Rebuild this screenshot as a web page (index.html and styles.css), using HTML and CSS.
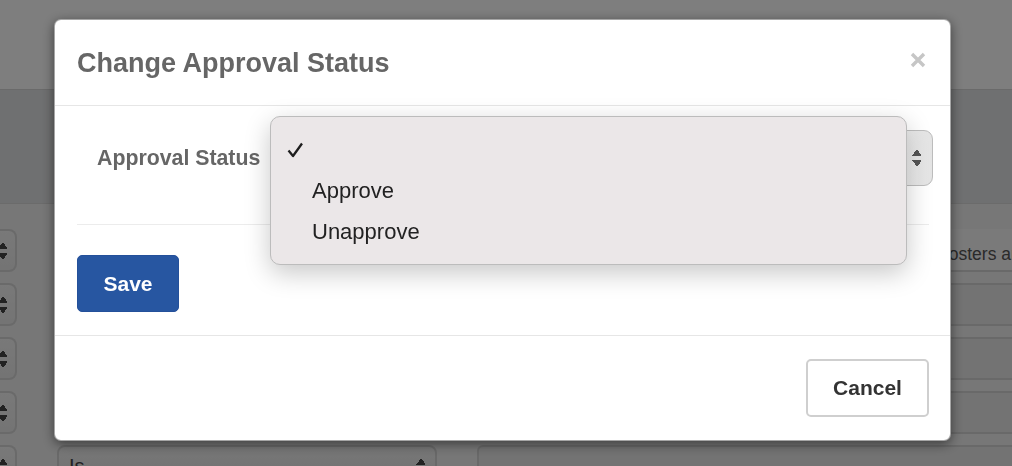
FILE: index.html
```html
<!DOCTYPE html>
<html lang="en">
<head>
  <meta charset="UTF-8">
  <title>Posters – Change Approval Status</title>
  <meta name="viewport" content="width=device-width, initial-scale=1">
  <link rel="stylesheet" href="styles.css">
</head>
<body>

  <!-- page behind the modal -->
  <div class="page">
    <div class="topbar"></div>
    <div class="band"></div>

    <div class="filters">
      <div class="stub"><span class="arrows"></span></div>
      <div class="field"></div>
      <div class="field text">posters and materials</div>

      <div class="stub"><span class="arrows"></span></div>
      <div class="field"></div>
      <div class="field"></div>

      <div class="stub"><span class="arrows"></span></div>
      <div class="field"></div>
      <div class="field"></div>

      <div class="stub"><span class="arrows"></span></div>
      <div class="field"></div>
      <div class="field"></div>

      <div class="stub"><span class="arrows"></span></div>
      <div class="field select">Is<span class="arrows"></span></div>
      <div class="field"></div>
    </div>
  </div>

  <div class="backdrop"></div>

  <div class="modal">
    <div class="modal-header">
      <h4 class="modal-title">Change Approval Status</h4>
      <span class="close">
        <svg width="16" height="16" viewBox="0 0 16 16">
          <path d="M2 2 L14 14 M14 2 L2 14" stroke="#c6c6c6" stroke-width="3.4" fill="none"/>
        </svg>
      </span>
    </div>

    <div class="modal-body">
      <div class="form-row">
        <label class="form-label">Approval Status</label>
        <div class="status-select"><span class="arrows"></span></div>
      </div>
      <hr>
      <button class="btn btn-primary">Save</button>
    </div>

    <div class="modal-footer">
      <button class="btn btn-default">Cancel</button>
    </div>

    <!-- open native dropdown -->
    <ul class="dropdown">
      <li class="selected">
        <svg class="check" width="16" height="16" viewBox="0 0 16 16">
          <path d="M1.5 8.5 L6 14 L15 1.5" stroke="#1e1e1e" stroke-width="2.3" fill="none" stroke-linejoin="round"/>
        </svg>
      </li>
      <li>Approve</li>
      <li>Unapprove</li>
    </ul>
  </div>

</body>
</html>
```

FILE: styles.css
```css
* { box-sizing: border-box; }

html, body {
  margin: 0;
  height: 466px;
  overflow: hidden;
}
body {
  font-family: 'Liberation Sans', Arial, 'Helvetica Neue', sans-serif;
  background: #fcfcfc;
  color: #333;
}

/* ---------- background page ---------- */
.topbar {
  height: 90px;
  background: #fcfcfc;
  border-bottom: 1px solid #d4d4d4;
}
.band {
  height: 114px;
  background: #dfe0e2;
  border-bottom: 1px solid #d6d6d6;
}
.filters {
  display: grid;
  grid-template-columns: 17px 380px 1fr;
  grid-auto-rows: 43px;
  column-gap: 40px;
  row-gap: 11px;
  padding-top: 25px;
  background: #efefef;
}
.stub {
  margin-left: -40px;
  border: 2px solid #d4d4d4;
  border-left: none;
  border-radius: 0 8px 8px 0;
  background: linear-gradient(#f2f2f2, #e8e8e8);
  display: flex;
  align-items: center;
  justify-content: flex-end;
  padding-right: 8px;
}
.field {
  border: 2px solid #d2d2d2;
  border-right: none;
  border-radius: 6px 0 0 6px;
  background: #e6e6e6;
}
.field.text {
  border: none;
  border-bottom: 2px solid #d2d2d2;
  border-radius: 0;
  background: #f4f4f4;
  display: flex;
  align-items: center;
  padding: 9px 0 0 462px;
  font-size: 17.5px;
  color: #555;
  white-space: nowrap;
  overflow: hidden;
}
.field.select {
  border-right: 2px solid #d2d2d2;
  border-radius: 8px;
  background: linear-gradient(#efefef, #e2e2e2);
  padding: 0 10px;
  font-size: 20px;
  color: #444;
  display: flex;
  align-items: center;
  justify-content: space-between;
}

.arrows {
  display: inline-block;
  width: 9px;
  height: 18px;
  --c: #444;
  background:
    linear-gradient(to bottom right, transparent 50%, var(--c) 50%) 0 0 / 5px 7px no-repeat,
    linear-gradient(to bottom left, transparent 50%, var(--c) 50%) 4.5px 0 / 5px 7px no-repeat,
    linear-gradient(to top right, transparent 50%, var(--c) 50%) 0 11px / 5px 7px no-repeat,
    linear-gradient(to top left, transparent 50%, var(--c) 50%) 4.5px 11px / 5px 7px no-repeat;
}

.backdrop {
  position: fixed;
  inset: 0;
  background: rgba(0, 0, 0, 0.5);
}

/* ---------- modal ---------- */
.modal {
  position: fixed;
  top: 19px;
  left: 54px;
  width: 897px;
  background: #fff;
  border: 1px solid rgba(0, 0, 0, 0.35);
  border-radius: 7px;
  box-shadow: 0 3px 12px rgba(0, 0, 0, 0.5);
}
.modal-header {
  height: 86px;
  padding: 2px 24px 0 22px;
  display: flex;
  align-items: center;
  justify-content: space-between;
  border-bottom: 1px solid #e6e6e6;
}
.modal-title {
  margin: 0;
  font-size: 27px;
  font-weight: bold;
  color: #666;
}
.close {
  display: flex;
  margin-bottom: 8px;
}

.modal-body {
  padding: 24px 21px 23px 22px;
  border-bottom: 1px solid #e6e6e6;
}
.form-row {
  display: flex;
  align-items: center;
  gap: 16px;
  padding-left: 20px;
  margin-right: -4px;
}
.form-label {
  font-size: 21.3px;
  font-weight: bold;
  color: #666;
  white-space: nowrap;
}
.status-select {
  flex: 1;
  height: 56px;
  border: 1px solid #bdbdbd;
  border-radius: 9px;
  background: linear-gradient(to right, #fff 85%, #e4e4e4), linear-gradient(#fbfbfb, #e6e6e6);
  display: flex;
  align-items: center;
  justify-content: flex-end;
  padding-right: 11px;
}
.status-select .arrows { --c: #555; }
hr {
  margin: 38px 0 30px;
  border: none;
  border-top: 1px solid #ececec;
}

.btn {
  font-family: inherit;
  font-size: 21px;
  font-weight: bold;
  height: 57px;
  border-radius: 5px;
  cursor: pointer;
}
.btn-primary {
  width: 102px;
  background: #2756a1;
  border: 1px solid #24509a;
  color: #fff;
}
.btn-default {
  width: 123px;
  height: 58px;
  background: #fff;
  border: 2px solid #cfcfcf;
  color: #333;
}
.modal-footer {
  padding: 23px 21px 23px;
  text-align: right;
}

/* ---------- dropdown list ---------- */
.dropdown {
  position: absolute;
  top: 96px;
  left: 215px;
  width: 637px;
  margin: 0;
  padding: 12px 0;
  list-style: none;
  background: #ebe7e8;
  border: 1px solid #bcbcbc;
  border-radius: 10px;
  box-shadow: 0 8px 26px rgba(0, 0, 0, 0.22);
}
.dropdown li {
  height: 41px;
  padding-left: 41px;
  display: flex;
  align-items: center;
  font-size: 22px;
  color: #222;
}
.dropdown li.selected { padding-left: 16px; }
```
